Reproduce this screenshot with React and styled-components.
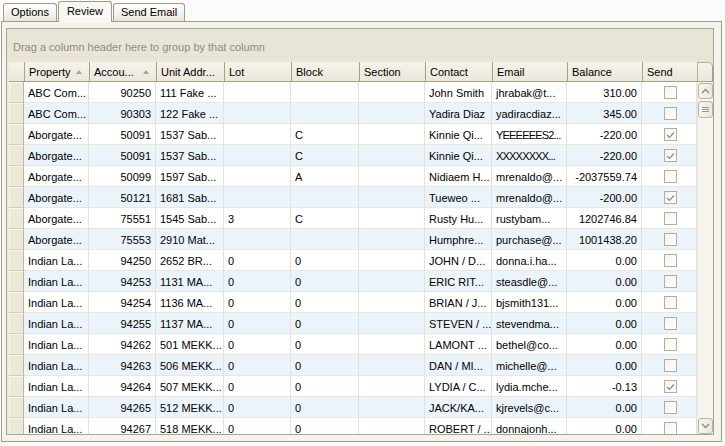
import React from 'react';
import styled, { createGlobalStyle } from 'styled-components';

const GlobalStyle = createGlobalStyle`
  html, body {
    margin: 0;
    padding: 0;
    background: #fbfbf9;
  }
  body {
    font-family: "Liberation Sans", Arial, sans-serif;
    font-size: 11px;
    color: #000;
  }
`;

// indicator + 10 data columns
const COLS = '15px 65px 67px 68px 67px 68px 66px 67px 75px 75px 55px';

const columns = [
  { title: 'Property', sort: true },
  { title: 'Accou...', sort: true },
  { title: 'Unit Addr...' },
  { title: 'Lot' },
  { title: 'Block' },
  { title: 'Section' },
  { title: 'Contact' },
  { title: 'Email' },
  { title: 'Balance' },
  { title: 'Send' },
];

const rows = [
  ['ABC Com...', '90250', '111 Fake ...', '', '', '', 'John Smith', 'jhrabak@t...', '310.00', false],
  ['ABC Com...', '90303', '122 Fake ...', '', '', '', 'Yadira Diaz', 'yadiracdiaz...', '345.00', false],
  ['Aborgate...', '50091', '1537 Sab...', '', 'C', '', 'Kinnie Qi...', 'YEEEEEES2...', '-220.00', true],
  ['Aborgate...', '50091', '1537 Sab...', '', 'C', '', 'Kinnie Qi...', 'XXXXXXXX...', '-220.00', true],
  ['Aborgate...', '50099', '1597 Sab...', '', 'A', '', 'Nidiaem H...', 'mrenaldo@...', '-2037559.74', false],
  ['Aborgate...', '50121', '1681 Sab...', '', '', '', 'Tueweo ...', 'mrenaldo@...', '-200.00', true],
  ['Aborgate...', '75551', '1545 Sab...', '3', 'C', '', 'Rusty Hu...', 'rustybam...', '1202746.84', false],
  ['Aborgate...', '75553', '2910 Mat...', '', '', '', 'Humphre...', 'purchase@...', '1001438.20', false],
  ['Indian La...', '94250', '2652 BR...', '0', '0', '', 'JOHN / D...', 'donna.i.ha...', '0.00', false],
  ['Indian La...', '94253', '1131 MA...', '0', '0', '', 'ERIC RIT...', 'steasdle@...', '0.00', false],
  ['Indian La...', '94254', '1136 MA...', '0', '0', '', 'BRIAN / J...', 'bjsmith131...', '0.00', false],
  ['Indian La...', '94255', '1137 MA...', '0', '0', '', 'STEVEN / ...', 'stevendma...', '0.00', false],
  ['Indian La...', '94262', '501 MEKK...', '0', '0', '', 'LAMONT ...', 'bethel@co...', '0.00', false],
  ['Indian La...', '94263', '506 MEKK...', '0', '0', '', 'DAN / MI...', 'michelle@...', '0.00', false],
  ['Indian La...', '94264', '507 MEKK...', '0', '0', '', 'LYDIA / C...', 'lydia.mche...', '-0.13', true],
  ['Indian La...', '94265', '512 MEKK...', '0', '0', '', 'JACK/KA...', 'kjrevels@c...', '0.00', false],
  ['Indian La...', '94267', '518 MEKK...', '0', '0', '', 'ROBERT / ...', 'donnajonh...', '0.00', false],
];

const RIGHT = [1, 8];

// capital-heavy values are wider in this font than in the original, squeeze them a bit
const isWide = (v) => /^[A-Z0-9]{6,}/.test(v);

const Page = styled.div`
  width: 725px;
  height: 446px;
  overflow: hidden;
`;

const TabStrip = styled.div`
  display: flex;
  align-items: flex-end;
  height: 21px;
  padding-left: 3px;
`;

const Tab = styled.div`
  position: relative;
  height: ${(p) => (p.active ? '21px' : '18px')};
  margin-bottom: ${(p) => (p.active ? '-1px' : '0')};
  margin-right: 1px;
  padding: 0 ${(p) => (p.active ? '8px' : '7px')};
  box-sizing: border-box;
  border: 1px solid #a09a8a;
  border-bottom: none;
  border-radius: 3px 3px 0 0;
  background: ${(p) =>
    p.active ? '#f8f7f2' : 'linear-gradient(#ffffff, #f0eee6 70%, #e8e5da)'};
  line-height: ${(p) => (p.active ? '18px' : '16px')};
  z-index: ${(p) => (p.active ? 2 : 1)};
  white-space: nowrap;
`;

const Panel = styled.div`
  width: 721px;
  height: 421px;
  margin-left: 1px;
  box-sizing: border-box;
  border: 1px solid #a09c90;
  background: #f5f3ec;
  padding: 6px 7px 0 4px;
`;

const Grid = styled.div`
  width: 708px;
  height: 407px;
  box-sizing: border-box;
  border: 1px solid #a6a39a;
  display: flex;
  flex-direction: column;
  background: #ece9db;
`;

const GroupPanel = styled.div`
  height: 33px;
  flex: none;
  display: flex;
  align-items: center;
  padding-left: 6px;
  padding-top: 2px;
  box-sizing: border-box;
  background: #e9e5d6;
  color: #8e8a7c;
`;

const TableArea = styled.div`
  flex: 1;
  display: flex;
  padding-left: 2px;
  min-height: 0;
`;

const Table = styled.div`
  width: 688px;
  display: flex;
  flex-direction: column;
  overflow: hidden;
`;

const HeaderRow = styled.div`
  display: grid;
  grid-template-columns: ${COLS};
  height: 20px;
  flex: none;
  box-sizing: border-box;
  border-bottom: 1px solid #a89f88;
  background: linear-gradient(#f5f3eb, #ebe7da);
`;

const HeaderCell = styled.div`
  display: flex;
  align-items: center;
  justify-content: space-between;
  padding: 0 7px 0 4px;
  border-left: 1px solid #a9a08a;
  white-space: nowrap;
  overflow: hidden;
  &:first-child {
    border-left: none;
  }
`;

const SortArrow = styled.span`
  width: 0;
  height: 0;
  border-left: 3px solid transparent;
  border-right: 3px solid transparent;
  border-bottom: 4px solid #aaa493;
`;

const Rows = styled.div`
  flex: 1;
  overflow: hidden;
  background: #fff;
`;

const Row = styled.div`
  display: grid;
  grid-template-columns: ${COLS};
  height: 21px;
  background: ${(p) => (p.alt ? '#ebf3fb' : '#ffffff')};
`;

const Indicator = styled.div`
  background: #ece9da;
  border-bottom: 1px solid #d3cdbb;
  border-right: 1px solid #bdb6a1;
  box-shadow: inset 1px 1px 0 #f8f7f2;
`;

const Cell = styled.div`
  display: flex;
  align-items: center;
  justify-content: ${(p) => (p.right ? 'flex-end' : p.center ? 'center' : 'flex-start')};
  padding: 0 ${(p) => (p.right ? '4px' : '2px')} 0 4px;
  border-right: 1px solid #e4e1d6;
  border-bottom: 1px solid #e8e6df;
  white-space: nowrap;
  overflow: hidden;
  padding-top: 1px;
  letter-spacing: ${(p) => (p.wide ? '-0.8px' : 'normal')};
`;

const Box = styled.span`
  width: 13px;
  height: 13px;
  box-sizing: border-box;
  border: 1px solid #b3ad99;
  background: linear-gradient(135deg, #f4f3ee, #ffffff);
  display: flex;
  align-items: center;
  justify-content: center;
`;

const ScrollBar = styled.div`
  width: 16px;
  display: flex;
  flex-direction: column;
`;

const Corner = styled.div`
  height: 20px;
  box-sizing: border-box;
  border: 1px solid #b7ae97;
  border-right-color: #a89f88;
  border-bottom-color: #a89f88;
  border-radius: 0 5px 0 0;
  background: linear-gradient(#f5f3eb, #ebe7da);
`;

const Track = styled.div`
  flex: 1;
  display: flex;
  flex-direction: column;
  padding-top: 1px;
  background: #f6f5f0;
  border-left: 1px solid #ecebe5;
`;

const Button = styled.div`
  height: ${(p) => p.h || 16}px;
  width: 15px;
  box-sizing: border-box;
  border: 1px solid #bcb39d;
  border-radius: 3px;
  background: linear-gradient(90deg, #f7f6f1, #ebe8dd);
  display: flex;
  align-items: center;
  justify-content: center;
  margin-bottom: ${(p) => (p.gap ? '2px' : '0')};
`;

const Spacer = styled.div`
  flex: 1;
`;

const Chevron = ({ up }) => (
  <svg width="9" height="6" viewBox="0 0 9 6">
    <polyline
      points={up ? '1,5 4.5,1.5 8,5' : '1,1 4.5,4.5 8,1'}
      fill="none"
      stroke="#8c877a"
      strokeWidth="1.3"
    />
  </svg>
);

const Grip = () => (
  <svg width="7" height="6" viewBox="0 0 7 6">
    <path d="M0 0.5h7M0 2.5h7M0 4.5h7" stroke="#9c978a" strokeWidth="1" />
  </svg>
);

const Check = () => (
  <svg width="9" height="8" viewBox="0 0 9 8">
    <polyline points="1,4 3.5,6.5 8,1.5" fill="none" stroke="#8a8a8a" strokeWidth="1.2" />
  </svg>
);

const App = () => {
  return (
    <Page>
      <GlobalStyle />
      <TabStrip>
        <Tab>Options</Tab>
        <Tab active>Review</Tab>
        <Tab>Send Email</Tab>
      </TabStrip>
      <Panel>
        <Grid>
          <GroupPanel>Drag a column header here to group by that column</GroupPanel>
          <TableArea>
            <Table>
              <HeaderRow>
                <HeaderCell />
                {columns.map((c) => (
                  <HeaderCell key={c.title}>
                    {c.title}
                    {c.sort && <SortArrow />}
                  </HeaderCell>
                ))}
              </HeaderRow>
              <Rows>
                {rows.map((r, i) => (
                  <Row key={i} alt={i % 2 === 1}>
                    <Indicator />
                    {r.slice(0, 9).map((v, j) => (
                      <Cell key={j} right={RIGHT.includes(j)} wide={j === 7 && isWide(v)}>
                        {v}
                      </Cell>
                    ))}
                    <Cell center>
                      <Box>{r[9] && <Check />}</Box>
                    </Cell>
                  </Row>
                ))}
              </Rows>
            </Table>
            <ScrollBar>
              <Corner />
              <Track>
                <Button gap>
                  <Chevron up />
                </Button>
                <Button h={17}>
                  <Grip />
                </Button>
                <Spacer />
                <Button>
                  <Chevron />
                </Button>
              </Track>
            </ScrollBar>
          </TableArea>
        </Grid>
      </Panel>
    </Page>
  );
};

export default App;
